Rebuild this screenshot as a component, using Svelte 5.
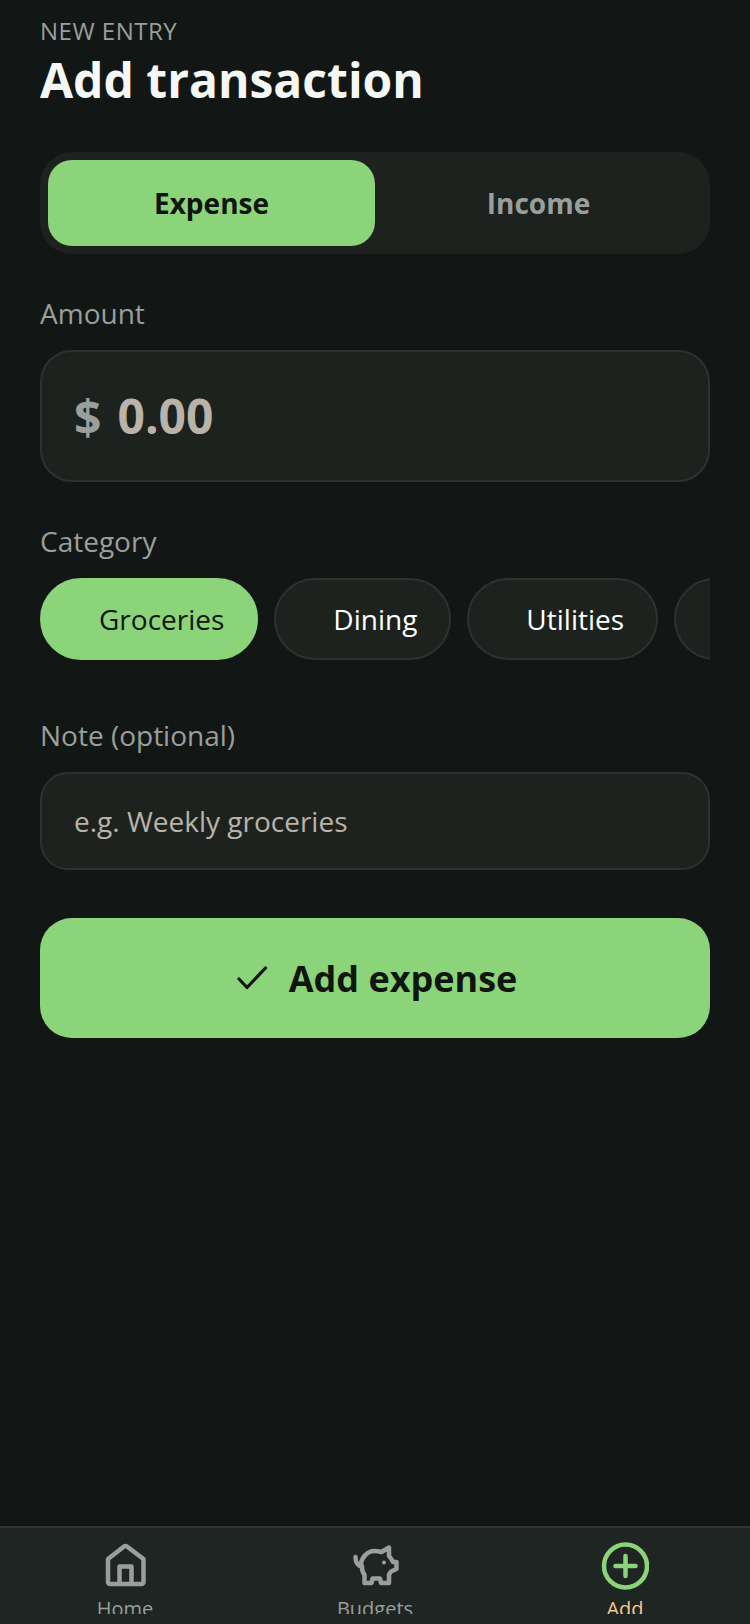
<script>
  let type = $state('Expense');
  let category = $state('Groceries');
  let amount = $state('');
  let note = $state('');

  const types = ['Expense', 'Income'];
  const categories = ['Groceries', 'Dining', 'Utilities', 'Transport'];
</script>

<div class="screen">
  <main>
    <p class="eyebrow">NEW ENTRY</p>
    <h1>Add transaction</h1>

    <div class="segment">
      {#each types as t}
        <button class="seg" class:active={type === t} onclick={() => (type = t)}>{t}</button>
      {/each}
    </div>

    <div class="label amount-label">Amount</div>
    <div class="amount">
      <span class="currency">$</span>
      <input placeholder="0.00" bind:value={amount} />
    </div>

    <div class="label category-label">Category</div>
    <div class="chips">
      {#each categories as c}
        <button class="chip" class:active={category === c} onclick={() => (category = c)}>{c}</button>
      {/each}
    </div>

    <div class="label note-label">Note (optional)</div>
    <input class="note" placeholder="e.g. Weekly groceries" bind:value={note} />

    <button class="submit">
      <svg width="40" height="40" viewBox="0 0 40 40" fill="none" stroke="#10160f" stroke-width="3.200" stroke-linecap="round" stroke-linejoin="round">
        <path d="M6 21l8 8.500L32.500 10" />
      </svg>
      Add expense
    </button>
  </main>

  <nav>
    <div class="tab">
      <svg width="48" height="48" viewBox="0 0 48 48" fill="none" stroke="#9a9f9c" stroke-width="4.500" stroke-linejoin="round">
        <path d="M7 17L23 4.500a2.500 2.500 0 0 1 3 0L42.500 17V40a2 2 0 0 1-2 2H9a2 2 0 0 1-2-2z" />
        <path d="M18.500 42V24.500h12V42" />
      </svg>
      <span>Home</span>
    </div>
    <div class="tab">
      <svg width="48" height="48" viewBox="0 0 48 48" fill="none" stroke="#9a9f9c" stroke-width="4.500" stroke-linejoin="round" stroke-linecap="round">
        <path d="M4.500 15c0 5 2 8 5 9" />
        <path d="M9.500 24c1-9 7-15 14-15 3 0 5 .5 7 1l7.500-4.500V14c2 2 3 4 4 6h3.500v7l-5.500 2.500c-1 1-1 2-2 3V41h-8l-1-4.500h-7.500l-1 4.500h-7v-8c-2-3-3-5-2.500-9z" />
        <circle cx="33" cy="20.500" r="2" fill="#9a9f9c" stroke="none" />
      </svg>
      <span>Budgets</span>
    </div>
    <div class="tab current">
      <svg width="48" height="48" viewBox="0 0 48 48" fill="none" stroke="#8bd47a" stroke-linecap="round">
        <circle cx="24.500" cy="24" r="21.500" stroke-width="4.500" />
        <path d="M24.500 14v20M14.500 24h20" stroke-width="4.500" />
      </svg>
      <span>Add</span>
    </div>
  </nav>
</div>

<style>
  :global(body) {
    background: #121716;
  }

  .screen {
    height: 1624px;
    display: flex;
    flex-direction: column;
    overflow: hidden;
    background: #121716;
    font-family: 'Open Sans', sans-serif;
    color: #fff;
  }

  main {
    flex: 1;
    display: flex;
    flex-direction: column;
    padding: 15px 40px 0;
    min-height: 0;
  }

  .eyebrow {
    margin: 0;
    font-size: 24px;
    line-height: 32px;
    letter-spacing: 0.5px;
    color: #9a9f9c;
  }

  h1 {
    margin: 1px 0 0;
    font-size: 48px;
    line-height: 64px;
    font-weight: 700;
    color: #f5f7f4;
  }

  .segment {
    margin-top: 40px;
    display: flex;
    padding: 8px;
    background: #1d221f;
    border-radius: 32px;
  }

  .seg {
    flex: 1;
    height: 86px;
    border: none;
    border-radius: 24px;
    background: transparent;
    font: 700 28px 'Open Sans', sans-serif;
    color: #9a9f9c;
  }

  .seg.active {
    background: #8bd47a;
    color: #10160f;
  }

  .label {
    font-size: 28px;
    line-height: 38px;
    color: #9a9f9c;
  }

  .amount-label {
    margin-top: 40px;
  }

  .amount {
    margin-top: 18px;
    height: 132px;
    box-sizing: border-box;
    display: flex;
    align-items: center;
    gap: 16px;
    padding: 0 32px;
    background: #1d221f;
    border: 2px solid #2d322f;
    border-radius: 32px;
  }

  .currency {
    font-size: 48px;
    font-weight: 700;
    color: #9a9f9c;
  }

  .amount input {
    flex: 1;
    min-width: 0;
    padding: 0 0 2px;
    border: none;
    outline: none;
    background: transparent;
    font: 700 48px 'Open Sans', sans-serif;
    color: #fff;
  }

  .amount input::placeholder {
    color: #bab3a9;
    opacity: 1;
  }

  .category-label {
    margin-top: 40px;
  }

  .chips {
    margin-top: 18px;
    display: flex;
    gap: 16px;
    overflow: hidden;
  }

  .chip {
    flex: none;
    height: 82px;
    padding: 0 32px 0 57px;
    background: #1d221f;
    border: 2px solid #2d322f;
    border-radius: 41px;
    font: 400 28px 'Open Sans', sans-serif;
    color: #fff;
  }

  .chip.active {
    background: #8bd47a;
    border-color: #8bd47a;
    color: #10160f;
  }

  .note-label {
    margin-top: 56px;
  }

  .note {
    margin-top: 18px;
    height: 98px;
    box-sizing: border-box;
    padding: 0 32px;
    background: #1d221f;
    border: 2px solid #2d322f;
    border-radius: 28px;
    outline: none;
    font: 400 28px 'Open Sans', sans-serif;
    color: #fff;
  }

  .note::placeholder {
    color: #bab3a9;
    opacity: 1;
  }

  .submit {
    margin-top: 48px;
    height: 120px;
    display: flex;
    align-items: center;
    justify-content: center;
    gap: 16px;
    border: none;
    border-radius: 32px;
    background: #8bd47a;
    font: 700 36px 'Open Sans', sans-serif;
    color: #10160f;
  }

  nav {
    flex: none;
    height: 98px;
    box-sizing: border-box;
    display: grid;
    grid-template-columns: repeat(3, 1fr);
    padding-top: 14px;
    background: #1f2522;
    border-top: 2px solid #323735;
    overflow: hidden;
  }

  .tab {
    height: 72px;
    overflow: hidden;
    display: flex;
    flex-direction: column;
    align-items: center;
    gap: 5px;
    font-size: 20px;
    line-height: 28px;
    color: #9a9f9c;
  }

  .tab svg {
    flex: none;
  }

  .tab.current {
    color: #f5c98a;
  }
</style>
